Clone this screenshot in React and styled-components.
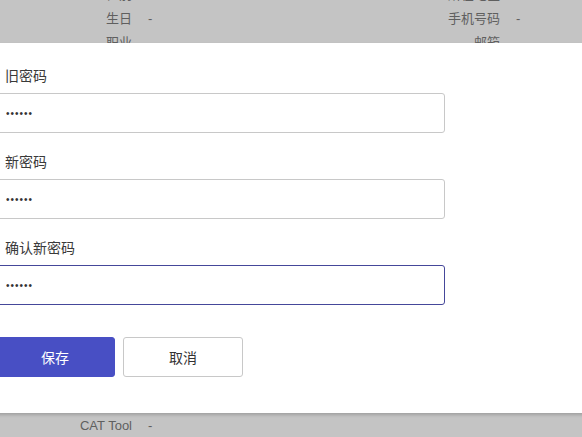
import React from "react";
import styled, { createGlobalStyle } from "styled-components";

const Global = createGlobalStyle`
  html, body { margin: 0; padding: 0; }
  body {
    width: 582px;
    height: 437px;
    overflow: hidden;
    font-family: "Liberation Sans", "Noto Sans CJK SC", sans-serif;
  }
`;

const Page = styled.div`
  position: relative;
  width: 582px;
  height: 437px;
  overflow: hidden;
  background: #c4c4c4;
  display: flex;
  flex-direction: column;
`;

const InfoGrid = styled.div`
  margin-top: -17px;
  display: grid;
  grid-template-columns: 132px 200px 136px 1fr;
  column-gap: 16px;
  grid-auto-rows: 24px;
  font-size: 13px;
  line-height: 24px;
  color: #5f5f5f;
`;

const InfoLabel = styled.div`
  text-align: right;
  white-space: nowrap;
`;

const InfoValue = styled.div`
  white-space: nowrap;
`;

const BottomRow = styled(InfoGrid)`
  margin-top: auto;
  grid-auto-rows: 22px;
  line-height: 22px;
`;

const Modal = styled.div`
  position: absolute;
  left: -30px;
  top: 43px;
  width: 650px;
  background: #fff;
  box-shadow: 0 2px 3px rgba(0, 0, 0, 0.18);
  padding: 22px 0 36px 25px;
  box-sizing: border-box;
`;

const Form = styled.form`
  display: flex;
  flex-direction: column;
  width: 450px;
`;

const Field = styled.div`
  display: flex;
  flex-direction: column;
  margin-bottom: 18px;
`;

const Label = styled.label`
  font-size: 14px;
  line-height: 22px;
  color: #3a3a3a;
  margin-bottom: 6px;
  display: flex;
  align-items: center;
`;

const Required = styled.span`
  color: #f0a0a0;
  width: 7px;
  margin-right: 3px;
  font-size: 13px;
`;

const Input = styled.input`
  box-sizing: border-box;
  height: 40px;
  width: 100%;
  padding: 0 10px;
  border: 1px solid ${(p) => (p.$focused ? "#45479a" : "#c8c8c8")};
  border-radius: 3px;
  font-family: "Liberation Sans", sans-serif;
  font-size: 10px;
  letter-spacing: 1px;
  color: #333;
  outline: none;
  background: #fff;
`;

const Actions = styled.div`
  display: flex;
  gap: 8px;
  margin-top: 14px;
`;

const Button = styled.button`
  box-sizing: border-box;
  width: 120px;
  height: 40px;
  border-radius: 3px;
  font-family: "Liberation Sans", "Noto Sans CJK SC", sans-serif;
  font-size: 14px;
  cursor: pointer;
  border: 1px solid ${(p) => (p.$primary ? "#484fc4" : "#c8c8c8")};
  background: ${(p) => (p.$primary ? "#484fc4" : "#fff")};
  color: ${(p) => (p.$primary ? "#fff" : "#333")};
`;

const topRows = [
  ["性别", "-", "所在地区", "-"],
  ["生日", "-", "手机号码", "-"],
  ["职业", "-", "邮箱", "-"],
];

const fields = [
  { label: "旧密码" },
  { label: "新密码" },
  { label: "确认新密码", focused: true },
];

export default function App() {
  return (
    <>
      <Global />
      <Page>
        <InfoGrid>
          {topRows.map((r, i) => (
            <React.Fragment key={i}>
              <InfoLabel>{r[0]}</InfoLabel>
              <InfoValue>{r[1]}</InfoValue>
              <InfoLabel>{r[2]}</InfoLabel>
              <InfoValue>{r[3]}</InfoValue>
            </React.Fragment>
          ))}
        </InfoGrid>
        <BottomRow>
          <InfoLabel>CAT Tool</InfoLabel>
          <InfoValue>-</InfoValue>
        </BottomRow>
        <Modal>
          <Form onSubmit={(e) => e.preventDefault()}>
            {fields.map((f) => (
              <Field key={f.label}>
                <Label>
                  <Required>*</Required>
                  {f.label}
                </Label>
                <Input
                  type="password"
                  defaultValue="123456"
                  $focused={f.focused}
                  readOnly
                />
              </Field>
            ))}
            <Actions>
              <Button type="button" $primary>保存</Button>
              <Button type="button">取消</Button>
            </Actions>
          </Form>
        </Modal>
      </Page>
    </>
  );
}
